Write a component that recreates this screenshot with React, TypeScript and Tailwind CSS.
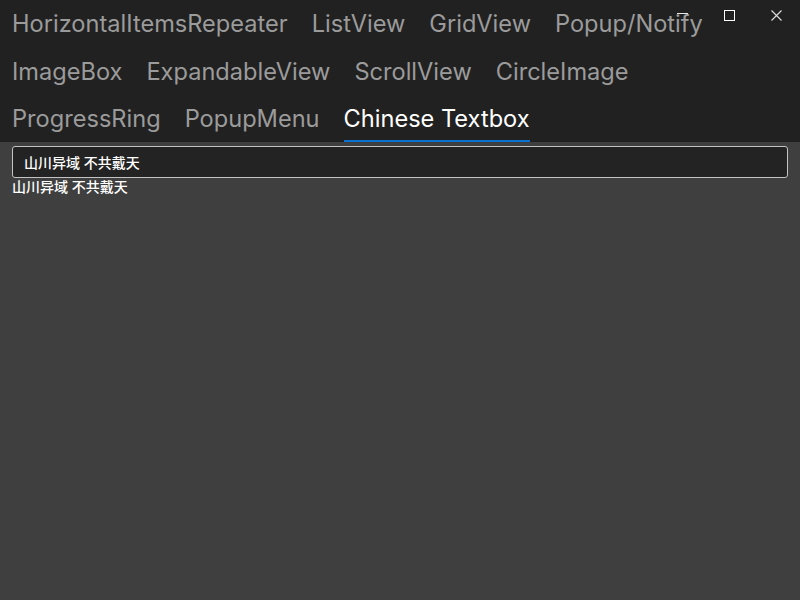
const tabRows = [
  ["HorizontalItemsRepeater", "ListView", "GridView", "Popup/Notify"],
  ["ImageBox", "ExpandableView", "ScrollView", "CircleImage"],
  ["ProgressRing", "PopupMenu", "Chinese Textbox"],
];

const selected = "Chinese Textbox";
const text = "山川异域 不共戴天";

function WindowButtons() {
  return (
    <div className="absolute top-0 right-0 flex">
      <div className="w-[47px] h-[31px] flex items-center justify-center">
        <svg width="11" height="11" viewBox="0 0 11 11">
          <path d="M0 3.5 H11" stroke="#e8e8e8" strokeWidth="1" />
        </svg>
      </div>
      <div className="w-[47px] h-[31px] flex items-center justify-center">
        <div className="w-[11px] h-[11px] border border-white" />
      </div>
      <div className="w-[47px] h-[31px] flex items-center justify-center">
        <svg width="11" height="11" viewBox="0 0 11 11">
          <path d="M0.5 0.5 L10.5 10.5 M10.5 0.5 L0.5 10.5" stroke="#e0e0e0" strokeWidth="1.1" />
        </svg>
      </div>
    </div>
  );
}

export default function App() {
  return (
    <div className="relative w-[800px] h-[600px] overflow-hidden bg-[#3f3f3f]" style={{ fontFamily: "Inter, 'Noto Sans CJK SC', sans-serif" }}>
      <div className="bg-[#212121] h-[142px] overflow-hidden pl-3">
        {tabRows.map((row, i) => (
          <div key={i} className="flex gap-x-6 h-[47.5px]">
            {row.map((t) => (
              <div key={t} className={"relative flex items-center h-full text-[23.6px] whitespace-nowrap " + (t === selected ? "text-white" : "text-[#9b9b9b]")}>
                {t}
                {t === selected && <div className="absolute left-0 right-0 bottom-[0.5px] h-[2px] bg-[#0a73d1]" />}
              </div>
            ))}
          </div>
        ))}
      </div>
      <div className="px-3 pt-1">
        <div className="h-[32px] rounded-[3px] border border-[#c3c3c3] bg-[#232323] flex items-center pl-[11px] text-[14px] text-white font-medium">
          {text}
        </div>
        <div className="text-[14px] leading-[18px] text-white font-medium">{text}</div>
      </div>
      <WindowButtons />
    </div>
  );
}
